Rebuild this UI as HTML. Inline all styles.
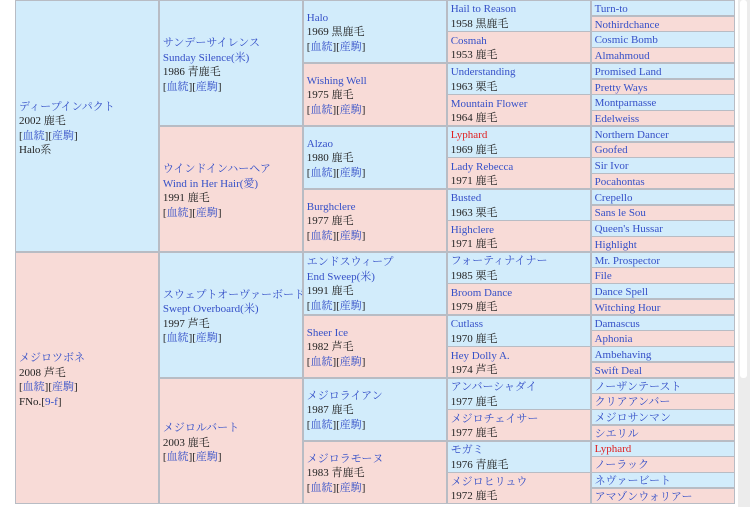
<!DOCTYPE html>
<html><head><meta charset="utf-8"><style>
html,body{margin:0;padding:0;background:#fff;width:750px;height:507px;overflow:hidden}
body{font-family:"Liberation Serif","Noto Serif CJK JP","Noto Serif CJK SC",serif;font-size:11px;color:#222}
.g{position:absolute;left:15px;top:0;width:720px;height:504px;display:grid;grid-template-columns:repeat(5,minmax(0,1fr));grid-template-rows:repeat(32,minmax(0,1fr));gap:1.5px;background:#b8bcc4;padding:1px;box-sizing:border-box}
.g>div{display:flex;flex-direction:column;justify-content:center;padding-left:3px;padding-top:2px;box-sizing:border-box;line-height:14.5px;white-space:nowrap;overflow:hidden;min-height:0}
.g>div>*{display:block;line-height:14.5px;height:14.5px}
.b{background:#d2ecfb}.p{background:#f8dbd7}
a{color:#3550c8;text-decoration:none}.r{color:#e02020}
.g>div>span a{display:inline}
.sb{position:absolute;left:738px;top:0;width:12px;height:507px;background:#ececec}
.sb div{position:absolute;left:2px;top:0;width:7px;height:378px;background:#fff;border-radius:3px}
</style></head><body>
<div class="g">
<div class="b" style="grid-column:1;grid-row:1/17;padding-top:5px"><a>ディープインパクト</a><span>2002 鹿毛</span><span>[<a>血統</a>][<a>産駒</a>]</span><span>Halo系</span></div>
<div class="p" style="grid-column:1;grid-row:17/33;padding-top:5px"><a>メジロツボネ</a><span>2008 芦毛</span><span>[<a>血統</a>][<a>産駒</a>]</span><span>FNo.[<a>9-f</a>]</span></div>
<div class="b" style="grid-column:2;grid-row:1/9;padding-top:4px"><a>サンデーサイレンス</a><a>Sunday Silence(米)</a><span>1986 青鹿毛</span><span>[<a>血統</a>][<a>産駒</a>]</span></div>
<div class="p" style="grid-column:2;grid-row:9/17;padding-top:4px"><a>ウインドインハーヘア</a><a>Wind in Her Hair(愛)</a><span>1991 鹿毛</span><span>[<a>血統</a>][<a>産駒</a>]</span></div>
<div class="b" style="grid-column:2;grid-row:17/25;padding-top:4px"><a>スウェプトオーヴァーボード</a><a>Swept Overboard(米)</a><span>1997 芦毛</span><span>[<a>血統</a>][<a>産駒</a>]</span></div>
<div class="p" style="grid-column:2;grid-row:25/33;padding-top:4px"><a>メジロルバート</a><span>2003 鹿毛</span><span>[<a>血統</a>][<a>産駒</a>]</span></div>
<div class="b" style="grid-column:3;grid-row:1/5"><a>Halo</a><span>1969 黒鹿毛</span><span>[<a>血統</a>][<a>産駒</a>]</span></div>
<div class="p" style="grid-column:3;grid-row:5/9"><a>Wishing Well</a><span>1975 鹿毛</span><span>[<a>血統</a>][<a>産駒</a>]</span></div>
<div class="b" style="grid-column:3;grid-row:9/13"><a>Alzao</a><span>1980 鹿毛</span><span>[<a>血統</a>][<a>産駒</a>]</span></div>
<div class="p" style="grid-column:3;grid-row:13/17"><a>Burghclere</a><span>1977 鹿毛</span><span>[<a>血統</a>][<a>産駒</a>]</span></div>
<div class="b" style="grid-column:3;grid-row:17/21"><a>エンドスウィープ</a><a>End Sweep(米)</a><span>1991 鹿毛</span><span>[<a>血統</a>][<a>産駒</a>]</span></div>
<div class="p" style="grid-column:3;grid-row:21/25"><a>Sheer Ice</a><span>1982 芦毛</span><span>[<a>血統</a>][<a>産駒</a>]</span></div>
<div class="b" style="grid-column:3;grid-row:25/29"><a>メジロライアン</a><span>1987 鹿毛</span><span>[<a>血統</a>][<a>産駒</a>]</span></div>
<div class="p" style="grid-column:3;grid-row:29/33"><a>メジロラモーヌ</a><span>1983 青鹿毛</span><span>[<a>血統</a>][<a>産駒</a>]</span></div>
<div class="b" style="grid-column:4;grid-row:1/3"><a>Hail to Reason</a><span>1958 黒鹿毛</span></div>
<div class="p" style="grid-column:4;grid-row:3/5"><a>Cosmah</a><span>1953 鹿毛</span></div>
<div class="b" style="grid-column:4;grid-row:5/7"><a>Understanding</a><span>1963 栗毛</span></div>
<div class="p" style="grid-column:4;grid-row:7/9"><a>Mountain Flower</a><span>1964 鹿毛</span></div>
<div class="b" style="grid-column:4;grid-row:9/11"><a class="r">Lyphard</a><span>1969 鹿毛</span></div>
<div class="p" style="grid-column:4;grid-row:11/13"><a>Lady Rebecca</a><span>1971 鹿毛</span></div>
<div class="b" style="grid-column:4;grid-row:13/15"><a>Busted</a><span>1963 栗毛</span></div>
<div class="p" style="grid-column:4;grid-row:15/17"><a>Highclere</a><span>1971 鹿毛</span></div>
<div class="b" style="grid-column:4;grid-row:17/19"><a>フォーティナイナー</a><span>1985 栗毛</span></div>
<div class="p" style="grid-column:4;grid-row:19/21"><a>Broom Dance</a><span>1979 鹿毛</span></div>
<div class="b" style="grid-column:4;grid-row:21/23"><a>Cutlass</a><span>1970 鹿毛</span></div>
<div class="p" style="grid-column:4;grid-row:23/25"><a>Hey Dolly A.</a><span>1974 芦毛</span></div>
<div class="b" style="grid-column:4;grid-row:25/27"><a>アンバーシャダイ</a><span>1977 鹿毛</span></div>
<div class="p" style="grid-column:4;grid-row:27/29"><a>メジロチェイサー</a><span>1977 鹿毛</span></div>
<div class="b" style="grid-column:4;grid-row:29/31"><a>モガミ</a><span>1976 青鹿毛</span></div>
<div class="p" style="grid-column:4;grid-row:31/33"><a>メジロヒリュウ</a><span>1972 鹿毛</span></div>
<div class="b" style="grid-column:5;grid-row:1"><a>Turn-to</a></div>
<div class="p" style="grid-column:5;grid-row:2"><a>Nothirdchance</a></div>
<div class="b" style="grid-column:5;grid-row:3"><a>Cosmic Bomb</a></div>
<div class="p" style="grid-column:5;grid-row:4"><a>Almahmoud</a></div>
<div class="b" style="grid-column:5;grid-row:5"><a>Promised Land</a></div>
<div class="p" style="grid-column:5;grid-row:6"><a>Pretty Ways</a></div>
<div class="b" style="grid-column:5;grid-row:7"><a>Montparnasse</a></div>
<div class="p" style="grid-column:5;grid-row:8"><a>Edelweiss</a></div>
<div class="b" style="grid-column:5;grid-row:9"><a>Northern Dancer</a></div>
<div class="p" style="grid-column:5;grid-row:10"><a>Goofed</a></div>
<div class="b" style="grid-column:5;grid-row:11"><a>Sir Ivor</a></div>
<div class="p" style="grid-column:5;grid-row:12"><a>Pocahontas</a></div>
<div class="b" style="grid-column:5;grid-row:13"><a>Crepello</a></div>
<div class="p" style="grid-column:5;grid-row:14"><a>Sans le Sou</a></div>
<div class="b" style="grid-column:5;grid-row:15"><a>Queen's Hussar</a></div>
<div class="p" style="grid-column:5;grid-row:16"><a>Highlight</a></div>
<div class="b" style="grid-column:5;grid-row:17"><a>Mr. Prospector</a></div>
<div class="p" style="grid-column:5;grid-row:18"><a>File</a></div>
<div class="b" style="grid-column:5;grid-row:19"><a>Dance Spell</a></div>
<div class="p" style="grid-column:5;grid-row:20"><a>Witching Hour</a></div>
<div class="b" style="grid-column:5;grid-row:21"><a>Damascus</a></div>
<div class="p" style="grid-column:5;grid-row:22"><a>Aphonia</a></div>
<div class="b" style="grid-column:5;grid-row:23"><a>Ambehaving</a></div>
<div class="p" style="grid-column:5;grid-row:24"><a>Swift Deal</a></div>
<div class="b" style="grid-column:5;grid-row:25"><a>ノーザンテースト</a></div>
<div class="p" style="grid-column:5;grid-row:26"><a>クリアアンバー</a></div>
<div class="b" style="grid-column:5;grid-row:27"><a>メジロサンマン</a></div>
<div class="p" style="grid-column:5;grid-row:28"><a>シエリル</a></div>
<div class="b" style="grid-column:5;grid-row:29"><a class="r">Lyphard</a></div>
<div class="p" style="grid-column:5;grid-row:30"><a>ノーラック</a></div>
<div class="b" style="grid-column:5;grid-row:31"><a>ネヴァービート</a></div>
<div class="p" style="grid-column:5;grid-row:32"><a>アマゾンウォリアー</a></div>
</div>
<div class="sb"><div></div></div>
</body></html>
